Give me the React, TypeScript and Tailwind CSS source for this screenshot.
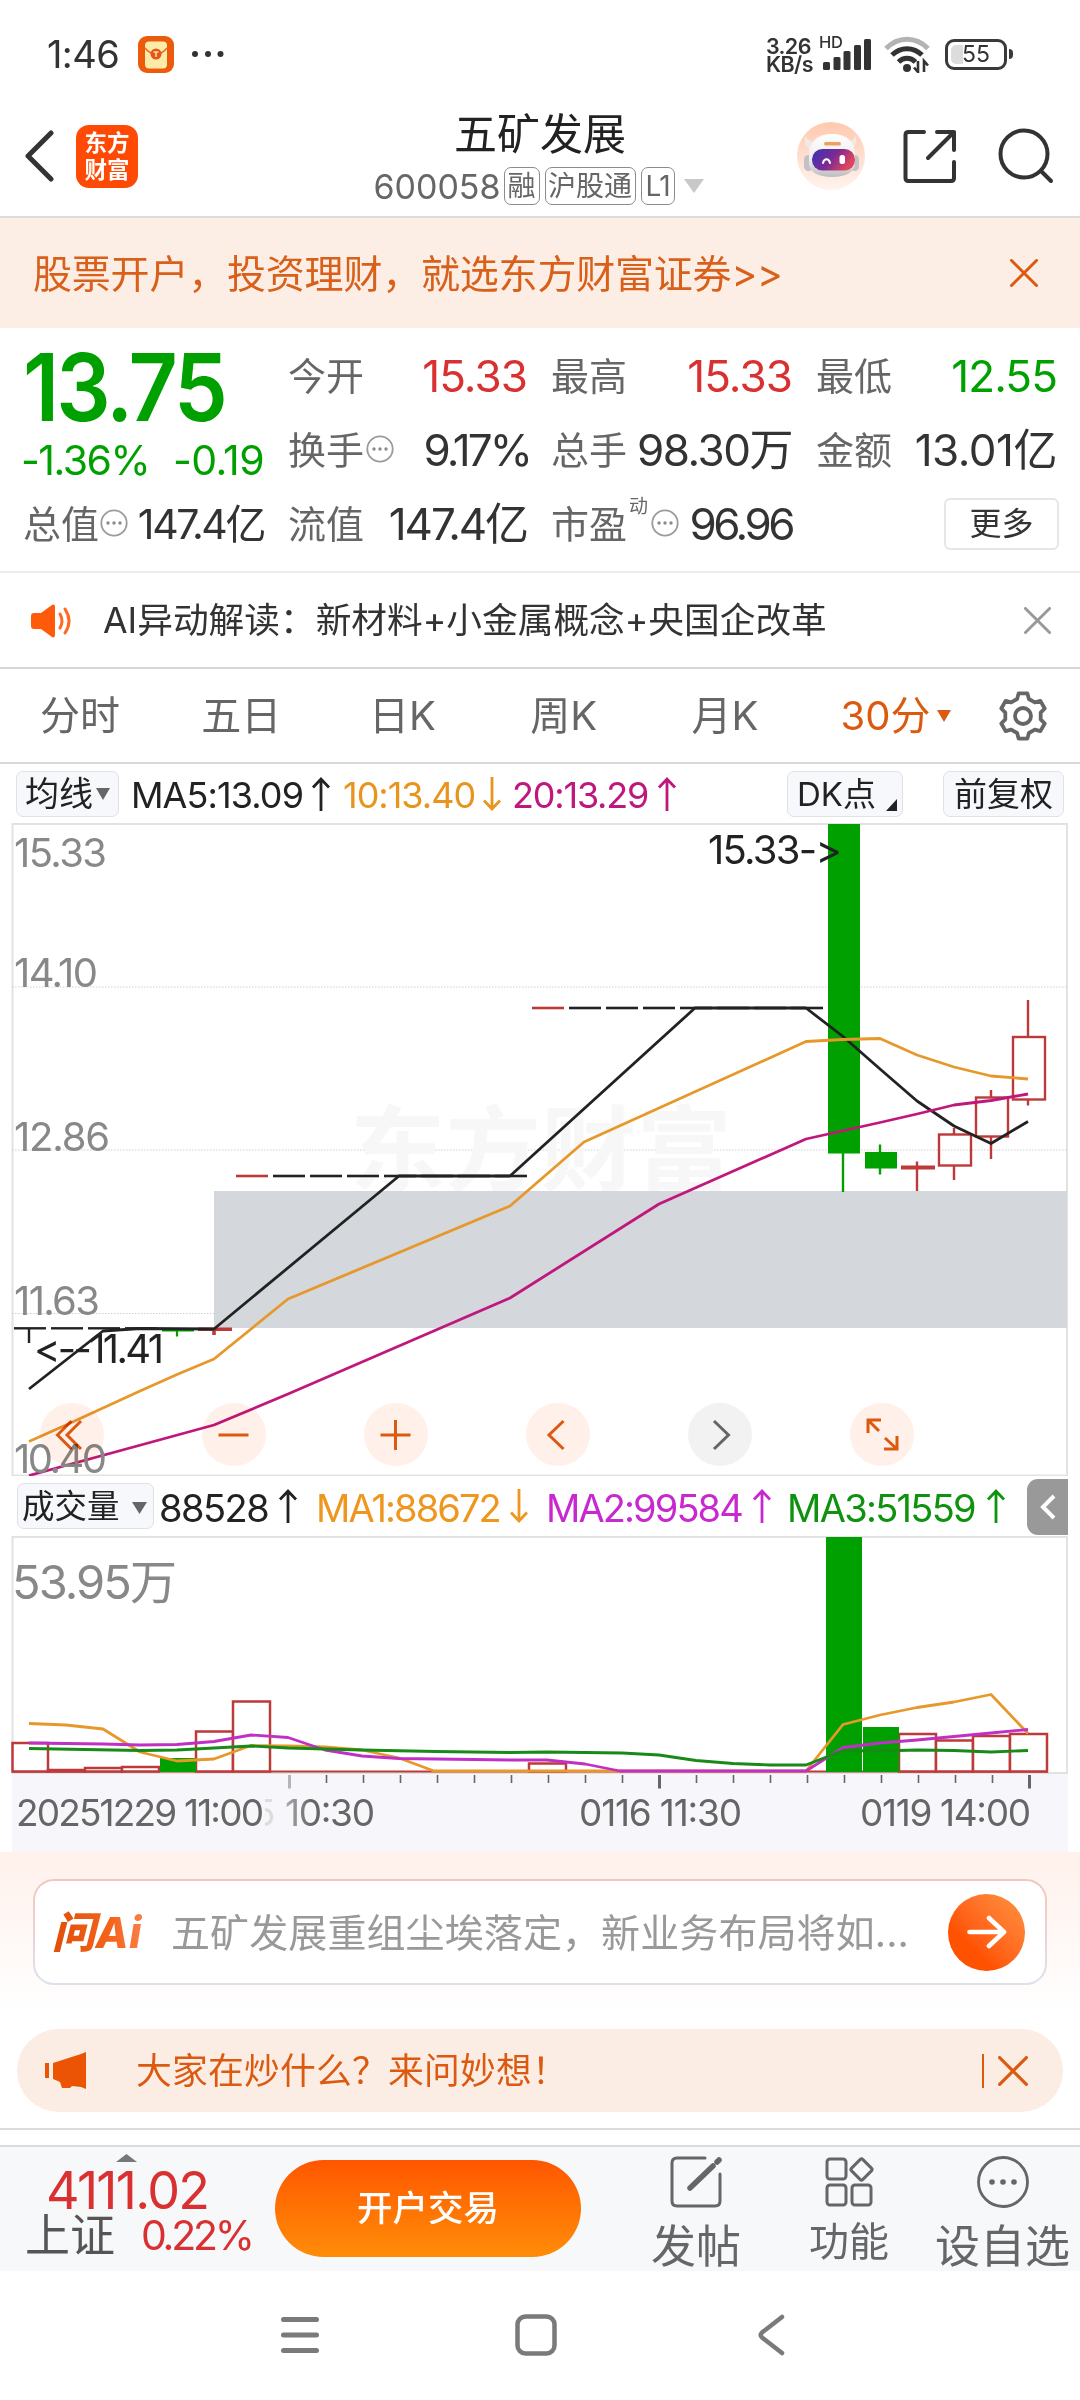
import type { ReactNode } from 'react';

const CENTER = (i: number) => 29 + 37 * i;
const RED = '#bd393a';
const GREEN = '#00a000';

function X({ size, color, w = 3 }: { size: number; color: string; w?: number }) {
  return (
    <svg width={size} height={size} viewBox="0 0 28 28" fill="none" stroke={color} strokeWidth={w} strokeLinecap="round">
      <path d="M1.5 1.5 26.5 26.5M26.5 1.5 1.5 26.5" />
    </svg>
  );
}

function Arrow({ dir, color }: { dir: 'up' | 'down'; color: string }) {
  return (
    <svg className="shrink-0" width="20" height="36" viewBox="0 0 20 36" fill="none" stroke={color} strokeWidth="2.8">
      {dir === 'up' ? <path d="M10 35V3M2 11.5 10 3l8 8.500" /> : <path d="M10 1v32M2 24.500 10 33l8-8.500" />}
    </svg>
  );
}

function Info() {
  return (
    <svg className="shrink-0" width="28" height="28" viewBox="0 0 28 28">
      <circle cx="14" cy="14" r="12.700" fill="none" stroke="#9b9b9b" strokeWidth="1.800" />
      <circle cx="8" cy="14" r="1.700" fill="#8a8a8a" />
      <circle cx="14" cy="14" r="1.700" fill="#8a8a8a" />
      <circle cx="20" cy="14" r="1.700" fill="#8a8a8a" />
    </svg>
  );
}

function StatusBar() {
  return (
    <div className="flex h-[108px] items-center pl-[47px]">
      <span className="w-[91px] text-[38px] tracking-[-0.6px] text-[#333]">1:46</span>
      <svg width="36" height="37" viewBox="0 0 36 37">
        <rect width="36" height="37" rx="9" fill="#ec5a0c" />
        <rect x="7" y="5.500" width="22" height="27" rx="4" fill="#fdeaa8" />
        <path d="M7 12c4 5 7 6 11 6s7-1 11-6" fill="none" stroke="#ec6a1c" strokeWidth="1.500" />
        <circle cx="18" cy="18" r="5.500" fill="#e2561a" />
        <path d="M15.500 16h5M18 16v5" stroke="#fde29a" strokeWidth="1.500" />
      </svg>
      <svg className="ml-[17px]" width="34" height="8" viewBox="0 0 34 8" fill="#333">
        <circle cx="4" cy="4" r="3" /><circle cx="17" cy="4" r="3" /><circle cx="29.500" cy="4" r="3" />
      </svg>
      <div className="ml-[541px] flex w-[53px] flex-col pt-[1px] text-[21.5px] font-semibold leading-[18px] tracking-[-0.6px] text-[#333]">
        <span>3.26</span>
        <span>KB/s</span>
      </div>
      <div className="flex h-[38px] w-[52px] shrink-0">
        <span className="w-0 text-[16.500px] font-medium leading-[15px] tracking-[-0.300px] text-[#333]">HD</span>
        <svg className="ml-[4px] mt-[4px]" width="48" height="31" viewBox="0 0 48 31" fill="#333">
          <rect x="0" y="23" width="7" height="8" rx="1.500" />
          <rect x="10.500" y="18" width="7" height="13" rx="1.500" />
          <rect x="20.500" y="12" width="7" height="19" rx="1.500" />
          <rect x="31" y="6" width="7" height="25" rx="1.500" />
          <rect x="41" y="0" width="7" height="31" rx="1.500" />
        </svg>
      </div>
      <svg className="ml-[13px]" width="47" height="38" viewBox="0 0 47 38" fill="none" strokeWidth="5">
        <path d="M2 13.500C14 1 32 1 44 13.500" stroke="#b3b3b3" />
        <path d="M8 20c8.500-8.500 21.500-8.500 30 0" stroke="#333" />
        <path d="M14.500 27c5-5 12-5 17 0" stroke="#333" />
        <circle cx="23" cy="33" r="4" fill="#333" />
        <path d="M34 26v11l-4-4.500M40 37V26l4 4.500" stroke="#333" strokeWidth="2.600" />
      </svg>
      <div className="relative ml-[14px] h-[31px] w-[62px] rounded-[9px] border-[3px] border-[#3a3a3a] p-[3px]">
        <div className="h-full w-[12px] rounded-l-[5px] bg-[#dcdcdc]" />
        <span className="absolute inset-0 flex items-center justify-center text-[23px] text-[#333]">55</span>
      </div>
      <div className="ml-[2px] h-[10px] w-[4px] rounded-r bg-[#3a3a3a]" />
    </div>
  );
}

function Robot() {
  return (
    <svg width="68" height="68" viewBox="0 0 68 68">
      <defs>
        <linearGradient id="halo" x1="0" y1="0" x2="0" y2="1">
          <stop offset="0" stopColor="#ffc9ae" /><stop offset="1" stopColor="#fff4ef" />
        </linearGradient>
        <linearGradient id="visor" x1="0" y1="0" x2="1" y2="0.400">
          <stop offset="0" stopColor="#3a34b4" /><stop offset="0.550" stopColor="#7a2a94" /><stop offset="1" stopColor="#e0465c" />
        </linearGradient>
        <linearGradient id="shell" x1="0" y1="0" x2="0" y2="1">
          <stop offset="0" stopColor="#ffffff" /><stop offset="0.600" stopColor="#eeebed" /><stop offset="1" stopColor="#bfbbc0" />
        </linearGradient>
      </defs>
      <circle cx="34" cy="34" r="34" fill="url(#halo)" />
      <path d="M8 14c-1 8 2 13 8 16l7-10c-7 1-12-1-15-6zM59 14c1 8-2 13-8 16l-6-10c6 1 11-1 14-6z" fill="#f1e9e8" />
      <rect x="7" y="33" width="9" height="16" rx="4.500" fill="#c4c0c5" />
      <rect x="53" y="33" width="9" height="16" rx="4.500" fill="#c4c0c5" />
      <path d="M12 34c0-14 8-22 23-22s23 8 23 22v7c0 9-9 14-23 14s-23-5-23-14z" fill="url(#shell)" />
      <rect x="27" y="20" width="17" height="3.500" rx="1.700" fill="#eea063" />
      <rect x="15" y="27" width="43" height="21.500" rx="10.500" fill="url(#visor)" />
      <path d="M26 41c1-5 6-5 7 0" fill="none" stroke="#fff" strokeWidth="2" strokeLinecap="round" />
      <rect x="42.500" y="33" width="5.500" height="9" rx="2.500" fill="#fff" />
    </svg>
  );
}

function Tag({ children, className }: { children: ReactNode; className: string }) {
  return (
    <span className={`flex h-[38px] items-center justify-center rounded-[7px] border-[1.5px] border-[#8c8c8c] text-[#666] ${className}`}>
      {children}
    </span>
  );
}

function Header() {
  return (
    <div className="relative flex h-[110px] items-center border-b-2 border-[#dcdcdc] pb-[12px] pl-[24px]">
      <svg width="30" height="52" viewBox="0 0 30 52" fill="none" stroke="#333" strokeWidth="5" strokeLinecap="round" strokeLinejoin="round">
        <path d="M27 3 4 26l23 23" />
      </svg>
      <div className="ml-[22px] flex h-[63px] w-[62px] flex-col items-center justify-center rounded-[13px] bg-[#ff4a05] text-[22.500px] font-bold leading-[27px] text-white">
        <span>东方</span>
        <span>财富</span>
      </div>
      <div className="absolute inset-x-0 top-0 flex h-full flex-col items-center">
        <span className="mt-[4px] flex h-[44px] items-center text-[43px] text-[#222]">五矿发展</span>
        <div className="mt-[11px] flex h-[38px] items-center pr-[3px]">
          <span className="mr-[3px] pt-[1px] text-[34px] text-[#666]">600058</span>
          <Tag className="mr-[5px] w-[36px] text-[28px]">融</Tag>
          <Tag className="mr-[5px] w-[91px] text-[28px]">沪股通</Tag>
          <Tag className="w-[34px] text-[28px] tracking-[-1px]">L1</Tag>
          <svg className="ml-[9px]" width="20" height="14" viewBox="0 0 20 14"><path d="M0 0h20L10 14z" fill="#c8c8c8" /></svg>
        </div>
      </div>
      <div className="relative ml-[659px]"><Robot /></div>
      <svg className="relative ml-[38px]" width="54" height="54" viewBox="0 0 54 54" fill="none" stroke="#333" strokeWidth="4" strokeLinecap="round" strokeLinejoin="round">
        <path d="M21 3H5.500Q2.500 3 2.500 6v43q0 3 3 3H48q3 0 3-3V33M34 3h17v18M51 3 25 29" />
      </svg>
      <svg className="relative ml-[41px]" width="56" height="56" viewBox="0 0 56 56" fill="none" stroke="#333" strokeWidth="4" strokeLinecap="round">
        <circle cx="26" cy="26" r="23.500" /><path d="m43 43 10 10" />
      </svg>
    </div>
  );
}

function Cell({ label, value, color, info, note }: { label: string; value: string; color: string; info?: boolean; note?: string }) {
  return (
    <div className="flex h-[74px] items-center">
      <span className="-ml-[1px] shrink-0 text-[38px] text-[#666]">{label}</span>
      {note && <span className="mb-[36px] ml-[2px] w-[20px] shrink-0 text-[19px] text-[#666]">{note}</span>}
      {info && <span className="mb-[3px] ml-[2px] shrink-0"><Info /></span>}
      <span className={`ml-auto text-[44px] ${color}`}>{value}</span>
    </div>
  );
}

function Quote() {
  return (
    <div className="grid h-[245px] grid-cols-[241px_238px_240px_240px] grid-rows-[74px_74px_74px] gap-x-[25px] border-b-2 border-[#ececec] pl-[23px] pt-[11px]">
      <div className="row-span-2">
        <div className="flex h-[96px] items-center text-[#00a000]">
          <span className="origin-left scale-x-92 text-[93px] font-semibold tracking-[-3.200px]">13.75</span>
        </div>
        <div className="flex h-[51px] items-center justify-between text-[41px] text-[#00a000]">
          <span className="-ml-[2px] tracking-[-1.5px]">-1.36%</span>
          <span className="tracking-[-0.6px]">-0.19</span>
        </div>
      </div>
      <Cell label="今开" value="15.33" color="text-[#d93032] tracking-[-0.9px]" />
      <Cell label="最高" value="15.33" color="text-[#d93032] tracking-[-0.9px]" />
      <Cell label="最低" value="12.55" color="text-[#00a000] tracking-[-0.9px]" />
      <Cell label="换手" info value="9.17%" color="-mr-[3px] text-[#333] tracking-[-2.900px]" />
      <Cell label="总手" value="98.30万" color="text-[#333] tracking-[-1.500px]" />
      <Cell label="金额" value="13.01亿" color="text-[#333] tracking-[-0.500px]" />
      <div className="flex h-[74px] items-center">
        <span className="text-[38px] text-[#666]">总值</span>
        <span className="mb-[3px] ml-[1px]"><Info /></span>
        <span className="ml-auto text-[41px] tracking-[-2.4px] text-[#333]">147.4亿</span>
      </div>
      <Cell label="流值" value="147.4亿" color="text-[#333] tracking-[-2.100px]" />
      <Cell label="市盈" note="动" info value="96.96" color="text-[#333] tracking-[-3.500px]" />
      <div className="flex h-[74px] items-center justify-end">
        <span className="-mr-[2px] flex h-[52px] w-[115px] items-center justify-center rounded-[6px] border-2 border-[#e6e6e6] text-[32px] text-[#333]">更多</span>
      </div>
    </div>
  );
}

function gearPath() {
  const pts: string[] = [];
  for (let k = 0; k < 6; k++) {
    const a = -90 + k * 60;
    for (const [r, d] of [[18, -19], [23, -11], [23, 11], [18, 19]]) {
      const t = ((a + d) * Math.PI) / 180;
      pts.push(`${(24 + r * Math.cos(t)).toFixed(1)} ${(25 + r * Math.sin(t)).toFixed(1)}`);
    }
  }
  return `M${pts.join('L')}Z`;
}

function Tabs() {
  return (
    <div className="flex h-[95px] items-center border-b-2 border-[#d8d8d8] pt-[1px] text-[40px] text-[#666]">
      {['分时', '五日', '日K', '周K', '月K'].map((t) => (
        <span key={t} className="w-[161.2px] pr-[1px] text-center">{t}</span>
      ))}
      <span className="flex w-[185px] items-center justify-center gap-[7px] pr-[5px] text-[#dc5a10]">
        30分
        <svg width="14" height="12" viewBox="0 0 14 12"><path d="M0 0h14L7 12z" fill="#dc5a10" /></svg>
      </span>
      <svg className="ml-[8px]" width="48" height="50" viewBox="0 0 48 50" fill="none" stroke="#666" strokeWidth="3.800" strokeLinejoin="round">
        <path d={gearPath()} />
        <circle cx="24" cy="25" r="8" />
      </svg>
    </div>
  );
}

function MaRow() {
  return (
    <div className="flex h-[59px] items-center pl-4 text-[36px]">
      <span className="flex h-[46px] w-[103px] shrink-0 items-center rounded-[7px] border-[1.5px] border-[#dfe1e4] bg-[#f7f8fb] pl-[8px] text-[34px] text-[#222]">
        均线
        <svg className="ml-[3px]" width="14" height="12" viewBox="0 0 14 12"><path d="M0 0h14L7 12z" fill="#666" /></svg>
      </span>
      <span className="ml-[12px] w-[180px] shrink-0 pt-[2px] tracking-[-0.9px] text-[#222]">MA5:13.09</span>
      <Arrow dir="up" color="#222" />
      <span className="ml-[12px] w-[139px] shrink-0 pt-[2px] tracking-[-1px] text-[#e8951f]">10:13.40</span>
      <Arrow dir="down" color="#e8951f" />
      <span className="ml-[10px] w-[145px] shrink-0 pt-[2px] tracking-[-1.2px] text-[#c0177d]">20:13.29</span>
      <Arrow dir="up" color="#c0177d" />
      <span className="relative ml-[110px] flex h-[46px] w-[116px] shrink-0 items-center rounded-[7px] border-[1.5px] border-[#dfe1e4] bg-[#f7f8fb] pl-[9px] pt-[2px] text-[33px] text-[#222]">
        DK点
        <svg className="absolute bottom-[5px] right-[5px]" width="11" height="12" viewBox="0 0 11 12"><path d="M11 0v12H0z" fill="#222" /></svg>
      </span>
      <span className="ml-[40px] flex h-[46px] w-[121px] shrink-0 items-center justify-center rounded-[7px] border-[1.5px] border-[#dfe1e4] bg-[#f7f8fb] pt-[1px] text-[33px] text-[#222]">前复权</span>
    </div>
  );
}

const hollow: [number, number, number, number, number][] = [
  [25, 1134.500, 1165.500, 1128, 1180],
  [26, 1097.500, 1136.500, 1090, 1159],
  [27, 1037, 1099.500, 1000, 1105.500],
];

function PriceChart() {
  return (
    <svg className="block" width="1080" height="653" viewBox="0 823 1080 653" fontFamily='Inter, "Noto Sans CJK SC", sans-serif'>
      <rect x="12.500" y="824" width="1054.500" height="651.500" fill="none" stroke="#e2e2e2" strokeWidth="2" />
      {[987, 1150, 1313.500].map((y) => (
        <path key={y} d={`M12 ${y}H1067`} stroke="#cfcfcf" strokeWidth="1.200" strokeDasharray="1.500 1.500" />
      ))}
      <text x="350" y="1184" fontSize="93" fontWeight="700" fill="#f7f7f7" textLength="382" lengthAdjust="spacingAndGlyphs">东方财富</text>
      <rect x="214" y="1191" width="853" height="137" fill="#d4d7dc" />
      {[0, 1, 2, 3].map((i) => (
        <path key={i} d={`M${CENTER(i) - 15} 1328.300h32`} stroke="#222" strokeWidth="2.400" />
      ))}
      <path d="M29 1328v15" stroke="#222" strokeWidth="2.400" />
      <path d="M162 1330.300h32M177 1330v6.500" stroke={GREEN} strokeWidth="2.200" />
      <path d="M198 1329.300h34M214 1329v6" stroke={RED} strokeWidth="3.600" />
      {[6, 14].map((i) => (
        <path key={i} d={`M${CENTER(i) - 15} ${i === 6 ? 1176 : 1008}h32`} stroke={RED} strokeWidth="2.600" />
      ))}
      {[7, 8, 9, 10, 11, 12, 13, 15, 16, 17, 18, 19, 20, 21].map((i) => (
        <path key={i} d={`M${CENTER(i) - 15} ${i < 14 ? 1176 : 1008}h32`} stroke="#222" strokeWidth="2.600" />
      ))}
      <rect x="828" y="824" width="32" height="329.500" fill={GREEN} />
      <path d="M843 1153v39M880 1144.500v30" stroke={GREEN} strokeWidth="2.400" />
      <rect x="865" y="1152" width="32" height="16.500" fill={GREEN} />
      <path d="M917 1161.500V1191" stroke={RED} strokeWidth="2.400" />
      <path d="M901 1167.500h34" stroke={RED} strokeWidth="4" />
      {hollow.map(([i, t, b, hi, lo]) => (
        <g key={i} stroke={RED} strokeWidth="2.400" fill="none">
          <rect x={CENTER(i) - 15} y={t} width="32" height={b - t} />
          <path d={`M${CENTER(i)} ${hi}V${t}M${CENTER(i)} ${b}V${lo}`} />
        </g>
      ))}
      <g fill="none" strokeWidth="2.800" strokeLinejoin="round">
        <path stroke="#222" d="M29 1389 103 1331 140 1328.500 214 1329 399 1176H510L695 1008H806L843 1036.500 880 1069 917 1101 954 1126 991 1143.500 1028 1121.500" />
        <path stroke="#e6982b" d="M29 1441.500 66 1425 103 1408 140 1391 177 1374.500 214 1359 288 1299 510 1206 584 1142 806 1041.500 843 1039.500 880 1038.500 917 1055 954 1067 991 1076 1028 1079" />
        <path stroke="#c0177d" d="M29 1475.500 214 1425 288 1394 510 1298 659 1204 806 1139 880 1122.500 917 1114 954 1105 991 1100.500 1028 1094" />
      </g>
      <g fontSize="40" fill="#888">
        <text x="14" y="867" textLength="93">15.33</text>
        <text x="14" y="987" textLength="84">14.10</text>
        <text x="14" y="1151" textLength="96">12.86</text>
        <text x="14" y="1315" textLength="86">11.63</text>
        <text x="14" y="1473" textLength="93">10.40</text>
      </g>
      <g className="[font-feature-settings:'calt'_0]" fontSize="40" fill="#222">
        <text x="708" y="864" textLength="134">15.33-&gt;</text>
        <text x="34" y="1363" textLength="130">&lt;--11.41</text>
      </g>
    </svg>
  );
}

const controls: [string, string][] = [
  ['double', 'M31.500 18 17.500 32l14 14M41 18 27 32l14 14'],
  ['minus', 'M16.500 32h30'],
  ['plus', 'M16.500 32h30M31.500 17v30'],
  ['prev', 'M37.500 18 23 32l14.500 14'],
  ['next', 'M26 18l14.500 14L26 46'],
  ['expand', 'M18 30V17h13M18 17l11 11M34 46h13V33M47 46 35 35'],
];

function ChartControls() {
  return (
    <div className="absolute left-[40px] top-[579.500px] flex gap-[98.500px] mix-blend-multiply">
      {controls.map(([name, d]) => (
        <div key={name} className={`h-[63.500px] w-[63.500px] rounded-full ${name === 'next' ? 'bg-[#f2f2f2]' : 'bg-[#fff0e9]'}`}>
          <svg width="64" height="64" viewBox="0 0 64 64" fill="none" stroke={name === 'next' ? '#666' : '#dc5a10'} strokeWidth="3">
            <path d={d} />
          </svg>
        </div>
      ))}
    </div>
  );
}

function VolumeRow() {
  return (
    <div className="flex h-[60px] items-center pl-[17px] text-[38px]">
      <span className="flex h-[46px] w-[137px] shrink-0 items-center rounded-[7px] border-[1.5px] border-[#dfe1e4] bg-[#f7f8fb] pl-[4px] pt-[3px] text-[32.500px] text-[#222]">
        成交量
        <svg className="ml-[12px]" width="15" height="12" viewBox="0 0 15 12"><path d="M0 0h15L7.500 12z" fill="#666" /></svg>
      </span>
      <span className="ml-[5px] w-[119px] shrink-0 pt-[3px] tracking-[-1.500px] text-[#222]">88528</span>
      <Arrow dir="up" color="#222" />
      <span className="ml-[18px] w-[193px] shrink-0 pt-[3px] tracking-[-1.900px] text-[#ee961e]">MA1:88672</span>
      <Arrow dir="down" color="#ee961e" />
      <span className="ml-[17px] w-[206px] shrink-0 pt-[3px] tracking-[-1.900px] text-[#c829cf]">MA2:99584</span>
      <Arrow dir="up" color="#c829cf" />
      <span className="ml-[15px] w-[199px] shrink-0 pt-[3px] tracking-[-1.700px] text-[#0d930d]">MA3:51559</span>
      <Arrow dir="up" color="#0d930d" />
      <span className="ml-[21px] mt-[2px] flex h-[56px] w-[41px] items-center justify-center rounded-l-[11px] bg-[#999]">
        <svg width="16" height="26" viewBox="0 0 16 26" fill="none" stroke="#fff" strokeWidth="4"><path d="M14 2 3 13l11 11" /></svg>
      </span>
    </div>
  );
}

const volumes: [number, number][] = [
  [0, 1743], [1, 1770], [2, 1768], [3, 1767], [5, 1731.500], [6, 1701.500], [14, 1763.500], [24, 1734], [25, 1740.500], [26, 1736], [27, 1734],
];

function VolumeChart() {
  return (
    <svg className="block" width="1080" height="316" viewBox="0 1536 1080 316" fontFamily='Inter, "Noto Sans CJK SC", sans-serif'>
      <rect x="12.500" y="1537" width="1054.500" height="236" fill="none" stroke="#e2e2e2" strokeWidth="2" />
      <rect x="12" y="1774" width="1056" height="78" fill="#f7f7fb" />
      <text x="12" y="1599" fontSize="47" fill="#888" textLength="165">53.95万</text>
      <path d="M12 1771.500H1048" stroke={RED} strokeWidth="2.200" />
      {volumes.map(([i, t]) => (
        <rect key={i} x={i === 0 ? 12.500 : CENTER(i) - 18} y={t} width={i === 0 ? 35.500 : 37} height={1771.500 - t} fill="#fff" stroke={RED} strokeWidth="2.500" />
      ))}
      <rect x="160" y="1758" width="36" height="14" fill={GREEN} />
      <rect x="826" y="1537" width="36" height="235" fill={GREEN} />
      <rect x="863" y="1727" width="36" height="45" fill={GREEN} />
      <g fill="none" strokeWidth="2.800" strokeLinejoin="round">
        <path stroke="#e6982b" d="M29 1723.500 66 1725 103 1729 140 1752 177 1761 214 1759 251 1745.500 288 1746 325 1747 362 1750 399 1758 434 1771H806L843 1724.500 880 1715 917 1707.500 954 1702 991 1694.500 1028 1733.500" />
        <path stroke="#c030c4" d="M29 1743 103 1744 140 1745 177 1744.500 214 1741.500 251 1735 288 1737.500 325 1750 362 1756 399 1758.500 510 1760 547 1760 585 1764 620 1771H806L843 1747.500 880 1743 917 1740 954 1736.500 991 1733 1028 1729.500" />
        <path stroke="#178a17" d="M29 1748.500 140 1750.500 177 1750 251 1746 288 1748 362 1750 436 1751.500 510 1752.500 547 1752 622 1753 659 1755 696 1760.500 733 1763.500 770 1765H806L843 1750.500 880 1751 917 1750 954 1750.500 991 1752 1028 1750.500" />
      </g>
      {Array.from({ length: 21 }, (_, k) => {
        const major = k === 0 || k === 10 || k === 20;
        return <path key={k} d={`M${289.500 + 37 * k} 1775v${major ? 13.500 : 8}`} stroke={k === 0 ? '#b5b5b5' : '#666'} strokeWidth={major ? 3 : 1.600} />;
      })}
      <defs>
        <linearGradient id="fade" gradientUnits="userSpaceOnUse" x1="262" y1="0" x2="312" y2="0">
          <stop offset="0" stopColor="#666" stopOpacity="0.100" /><stop offset="1" stopColor="#666" />
        </linearGradient>
        <clipPath id="rest"><rect x="265" y="1790" width="20" height="44" /></clipPath>
      </defs>
      <g fontSize="37" fill="#666">
        <text x="16" y="1826" textLength="248">20251229 11:00</text>
        <text x="253" y="1826" fillOpacity="0.180" clipPath="url(#rest)">5</text>
        <text x="285" y="1826" fill="url(#fade)" textLength="90">10:30</text>
        <text x="579" y="1826" textLength="163">0116 11:30</text>
        <text x="860" y="1826" textLength="171">0119 14:00</text>
      </g>
    </svg>
  );
}

function AskAi() {
  return (
    <div className="h-[276px] bg-linear-to-b from-[#fff1ec] to-white to-60% pt-[27px]">
      <div className="mx-auto h-[106px] w-[1014px] rounded-[21px] bg-linear-to-b from-[#f3c6bc] to-[#dbe2ec] p-[2px]">
        <div className="flex h-full items-center rounded-[19px] bg-white pl-[17px]">
          <span className="w-[119px] bg-linear-to-r from-[#e04e08] via-[#f4641a] to-[#ff9560] bg-clip-text pb-[6px] pt-[6px] text-[43px] font-extrabold italic leading-none tracking-[0.500px] text-transparent">问Ai</span>
          <span className="w-[777px] text-[39px] tracking-[0.100px] text-[#999]">五矿发展重组尘埃落定，新业务布局将如...</span>
          <span className="flex h-[77px] w-[77px] items-center justify-center rounded-full bg-linear-to-tr from-[#ff5200] from-30% to-[#ff9340]">
            <svg width="40" height="36" viewBox="0 0 40 36" fill="none" stroke="#fff" strokeWidth="4.600" strokeLinecap="round" strokeLinejoin="round">
              <path d="M2.500 18H37M22 4l15 14-15 14" />
            </svg>
          </span>
        </div>
      </div>
      <div className="ml-[17px] mt-[44px] flex h-[83px] w-[1046px] items-center rounded-full bg-[#fbede4] pl-[28px] text-[#dc5a10]">
        <svg width="42" height="37" viewBox="0 0 42 37" fill="#ea5404">
          <path d="M0 11h4v15H0zM8 11 36 2l5-2v37l-5-2-9-1-2 2h-8l-2-6-7-3z" />
        </svg>
        <span className="ml-[49px] w-[846px] pt-[2px] text-[35.800px] tracking-[0.200px]">大家在炒什么？来问妙想！</span>
        <span className="mr-[14px] h-[34px] w-[1.500px] bg-[#dc5a10]" />
        <X size={30} color="#dc5a10" />
      </div>
    </div>
  );
}

function BottomBar() {
  return (
    <div className="flex h-[126px] border-t-2 border-[#dcdcdc] bg-[#f7f8fa]">
      <div className="w-[275px] shrink-0 pt-[7px]">
        <svg className="ml-[116px]" width="21" height="8" viewBox="0 0 21 8"><path d="M10.500 0 21 8H0z" fill="#777" /></svg>
        <div className="mt-[5px] flex h-[48px] items-center pl-[46px] text-[52px] tracking-[-1.700px] text-[#d93032]">4111.02</div>
        <div className="flex h-[41px] items-center pl-[25px]">
          <span className="w-[116px] text-[45px] text-[#555]">上证</span>
          <span className="text-[41px] tracking-[-3.200px] text-[#d93032]">0.22%</span>
        </div>
      </div>
      <div className="mt-[13px] flex h-[97px] w-[306px] shrink-0 items-center justify-center rounded-full bg-linear-to-b from-[#ff5500] to-[#ff8c08] text-[35.500px] font-medium text-white">开户交易</div>
      <div className="ml-[38px] flex w-[154px] flex-col items-center pt-[8px]">
        <svg width="54" height="54" viewBox="0 0 54 54" fill="none" stroke="#666" strokeWidth="3" strokeLinecap="round">
          <path d="M36 3H8Q3 3 3 8v38q0 5 5 5h38q5 0 5-5V19" />
          <path d="M21 33 44 11" strokeWidth="5.500" /><path d="m48 7 2-2" strokeWidth="5.500" />
        </svg>
        <span className="mt-[15px] text-[45px] text-[#666]">发帖</span>
      </div>
      <div className="flex w-[152px] flex-col items-center pt-[8px]">
        <svg width="50" height="54" viewBox="0 0 50 54" fill="none" stroke="#666" strokeWidth="3">
          <rect x="3" y="4" width="19" height="20" rx="3" /><rect x="3" y="30" width="19" height="20" rx="3" /><rect x="28" y="30" width="19" height="20" rx="3" />
          <rect x="29.500" y="6.500" width="16" height="16" rx="2" transform="rotate(45 37.500 14.500)" />
        </svg>
        <span className="mt-[13px] text-[40px] text-[#666]">功能</span>
      </div>
      <div className="flex w-[155px] flex-col items-center pt-[8px]">
        <svg width="54" height="54" viewBox="0 0 54 54" fill="#666">
          <circle cx="27" cy="27" r="24.500" fill="none" stroke="#666" strokeWidth="2.800" />
          <circle cx="16" cy="27" r="2.800" /><circle cx="27" cy="27" r="2.800" /><circle cx="38" cy="27" r="2.800" />
        </svg>
        <span className="mt-[15px] text-[45px] text-[#666]">设自选</span>
      </div>
    </div>
  );
}

function NavBar() {
  return (
    <div className="flex h-[129px] items-center bg-white pb-[2px] pl-[281px]">
      <svg width="38" height="38" viewBox="0 0 38 38" stroke="#7a7a7a" strokeWidth="5" strokeLinecap="round"><path d="M2.500 3.500h33M2.500 19h33M2.500 34.500h33" /></svg>
      <svg className="ml-[195px]" width="44" height="44" viewBox="0 0 44 44" fill="none" stroke="#7a7a7a" strokeWidth="4.500"><rect x="3.500" y="3.500" width="37" height="37" rx="8" /></svg>
      <svg className="ml-[199px]" width="28" height="42" viewBox="0 0 28 42" fill="none" stroke="#7a7a7a" strokeWidth="4.500" strokeLinecap="round" strokeLinejoin="round"><path d="M25 3 5 18.500q-2.500 2.500 0 5L25 39" /></svg>
    </div>
  );
}

export default function App() {
  return (
    <div className="h-[2400px] w-[1080px] overflow-hidden whitespace-nowrap bg-white font-['Inter','Noto_Sans_CJK_SC',sans-serif] leading-none">
      <StatusBar />
      <Header />
      <div className="flex h-[110px] items-center bg-[#fceee5] pl-[33px] text-[39px] tracking-[-0.200px] text-[#d9601a]">
        <span className="w-[977px]">股票开户，投资理财，就选东方财富证券&gt;&gt;</span>
        <X size={28} color="#dc5a10" />
      </div>
      <Quote />
      <div className="flex h-[96px] items-center border-b-2 border-[#d8d8d8] pl-[31px] pt-[1px] text-[35.700px] text-[#333]">
        <svg width="42" height="34" viewBox="0 0 42 34" fill="#ff5a0a">
          <path d="M3 9h7L21 1q3-1.500 3 2v28q0 3.500-3 2L10 25H3q-3 0-3-3V12q0-3 3-3z" />
          <path d="M29 10q4 7 0 14M34 5q8 12 0 24" fill="none" stroke="#ff6a20" strokeWidth="3" strokeLinecap="round" />
        </svg>
        <span className="ml-[30px] w-[921px]">AI异动解读：新材料+小金属概念+央国企改革</span>
        <X size={27} color="#999" />
      </div>
      <Tabs />
      <MaRow />
      <div className="relative">
        <PriceChart />
        <ChartControls />
      </div>
      <VolumeRow />
      <VolumeChart />
      <AskAi />
      <div className="h-[17px] border-t-2 border-[#dcdcdc]" />
      <BottomBar />
      <NavBar />
    </div>
  );
}
